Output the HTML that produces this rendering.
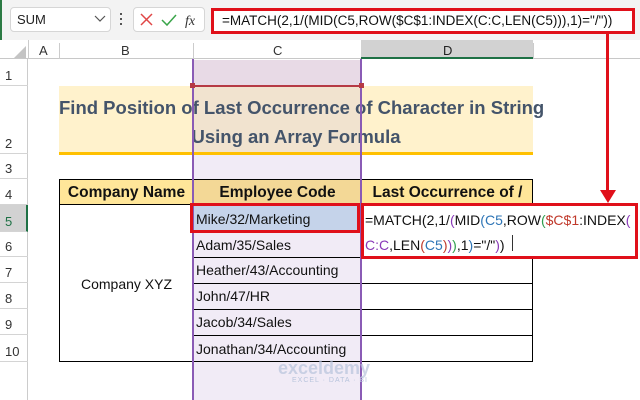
<!DOCTYPE html>
<html><head><meta charset="utf-8"><style>
*{margin:0;padding:0;box-sizing:border-box}
body{width:640px;height:400px;background:#fff;position:relative;overflow:hidden;font-family:"Liberation Sans",sans-serif}
.a{position:absolute}
.t{font-family:"Liberation Sans",sans-serif;white-space:nowrap}
.rh{position:absolute;left:0;width:28px;font-size:13px;color:#333;padding-left:5px;border-bottom:1px solid #d4d4d4;display:flex;align-items:flex-end;padding-bottom:2px}
.cell{position:absolute;font-size:14px;color:#111;white-space:nowrap;display:flex;align-items:center}
</style></head><body>
<!-- top bar -->
<div class="a" style="left:0;top:0;width:640px;height:40px;background:#f3f3f3"></div>
<div class="a" style="left:0;top:0;width:2px;height:400px;background:#2b7a44"></div>
<div class="a" style="left:10px;top:7px;width:101px;height:25px;background:#fff;border:1px solid #d6d6d6;border-radius:4px"></div>
<div class="a t" style="left:17px;top:12px;font-size:13px;color:#222">SUM</div>
<svg class="a" style="left:94px;top:15px" width="12" height="8"><path d="M1 1 L6 6 L11 1" stroke="#555" fill="none" stroke-width="1.2"/></svg>
<div class="a" style="left:120px;top:13px;width:2px;height:2px;background:#555;box-shadow:0 5px 0 #555,0 10px 0 #555"></div>
<div class="a" style="left:133px;top:7px;width:72px;height:25px;background:#fff;border:1px solid #d6d6d6;border-radius:4px"></div>
<svg class="a" style="left:139px;top:12px" width="60" height="16"><path d="M2 2 L13 13 M13 2 L2 13" stroke="#e04646" stroke-width="1.5"/><path d="M23 8 L28 13 L37 3" stroke="#3aa54a" fill="none" stroke-width="1.5"/><text x="46" y="13" font-family="Liberation Serif" font-style="italic" font-size="14" fill="#333">fx</text></svg>
<div class="a" style="left:211px;top:8px;width:424px;height:26px;background:#fff;border:3px solid #e0101a"></div>
<div class="a t" style="left:222px;top:13px;font-size:13.5px;color:#111">=MATCH(2,1/(MID(C5,ROW($C$1:INDEX(C:C,LEN(C5))),1)="/"))</div>
<!-- column header -->
<div class="a" style="left:0;top:40px;width:640px;height:19px;background:#fff;border-bottom:1px solid #c8c8c8"></div>
<svg class="a" style="left:14px;top:46px" width="12" height="12"><path d="M12 0 L12 12 L0 12 Z" fill="#c4c4c4"/></svg>
<div class="a" style="left:28px;top:40px;width:1px;height:19px;background:#ccc"></div>
<div class="a" style="left:59px;top:43px;width:1px;height:16px;background:#ccc"></div>
<div class="a" style="left:193px;top:43px;width:1px;height:16px;background:#ccc"></div>
<div class="a" style="left:361px;top:40px;width:172px;height:19px;background:#d2d2d2;border-bottom:2px solid #1e7145"></div>
<div class="a" style="left:533px;top:43px;width:1px;height:16px;background:#ccc"></div>
<div class="a t" style="left:39px;top:43px;font-size:13px;color:#333">A</div>
<div class="a t" style="left:121px;top:43px;font-size:13px;color:#333">B</div>
<div class="a t" style="left:273px;top:43px;font-size:13px;color:#333">C</div>
<div class="a t" style="left:443px;top:43px;font-size:13px;color:#222">D</div>
<!-- row headers -->
<div class="a" style="left:0;top:59px;width:28px;height:341px;background:#fff;border-right:1px solid #ccc"></div>
<div class="rh" style="top:59px;height:27px">1</div>
<div class="rh" style="top:86px;height:68px">2</div>
<div class="rh" style="top:154px;height:25px">3</div>
<div class="rh" style="top:179px;height:26px">4</div>
<div class="rh" style="top:205px;height:27px;background:#d2d2d2;border-right:2px solid #1e7145;color:#1e7145">5</div>
<div class="rh" style="top:232px;height:25px">6</div>
<div class="rh" style="top:257px;height:26px">7</div>
<div class="rh" style="top:283px;height:26px">8</div>
<div class="rh" style="top:309px;height:26px">9</div>
<div class="rh" style="top:335px;height:27px">10</div>
<!-- column C highlight -->
<div class="a" style="left:193px;top:60px;width:168px;height:340px;background:#f1ebf6"></div>
<div class="a" style="left:193px;top:60px;width:168px;height:26px;background:#e8dae6"></div>
<!-- title -->
<div class="a" style="left:59px;top:86px;width:474px;height:66px;background:#fff2cc"></div>
<div class="a" style="left:193px;top:86px;width:168px;height:66px;background:#f1e3cf"></div>
<div class="a" style="left:59px;top:152px;width:474px;height:3px;background:#ffc000"></div>
<div class="a t" style="left:59px;top:93px;width:474px;text-align:center;font-size:18.5px;font-weight:bold;color:#44546a;line-height:29px">Find Position of Last Occurrence of Character in String<br>Using an Array Formula</div>
<!-- table -->
<div class="a" style="left:59px;top:179px;width:474px;height:183px;border:1px solid #000"></div>
<div class="a" style="left:60px;top:180px;width:472px;height:25px;background:#ffe699;border-bottom:1px solid #000"></div>
<div class="a" style="left:193px;top:180px;width:168px;height:25px;background:#f3d896"></div>
<div class="a" style="left:193px;top:179px;width:1px;height:183px;background:#000"></div>
<div class="a" style="left:361px;top:179px;width:1px;height:183px;background:#000"></div>
<div class="cell" style="left:60px;top:180px;width:133px;height:25px;justify-content:center;font-weight:bold;font-size:15.5px">Company Name</div>
<div class="cell" style="left:194px;top:180px;width:167px;height:25px;justify-content:center;font-weight:bold;font-size:15.5px">Employee Code</div>
<div class="cell" style="left:362px;top:180px;width:171px;height:25px;justify-content:center;font-weight:bold;font-size:15.5px">Last Occurrence of /</div>
<div class="cell" style="left:60px;top:205px;width:133px;height:157px;justify-content:center">Company XYZ</div>
<div class="a" style="left:194px;top:206px;width:166px;height:25px;background:#c5d3ea"></div>
<div class="a" style="left:194px;top:231px;width:339px;height:1px;background:#000"></div>
<div class="a" style="left:194px;top:257px;width:339px;height:1px;background:#000"></div>
<div class="a" style="left:194px;top:283px;width:339px;height:1px;background:#000"></div>
<div class="a" style="left:194px;top:309px;width:339px;height:1px;background:#000"></div>
<div class="a" style="left:194px;top:335px;width:339px;height:1px;background:#000"></div>
<div class="cell" style="left:196px;top:205px;height:27px">Mike/32/Marketing</div>
<div class="cell" style="left:196px;top:232px;height:25px">Adam/35/Sales</div>
<div class="cell" style="left:196px;top:257px;height:26px">Heather/43/Accounting</div>
<div class="cell" style="left:196px;top:283px;height:26px">John/47/HR</div>
<div class="cell" style="left:196px;top:309px;height:26px">Jacob/34/Sales</div>
<div class="cell" style="left:196px;top:335px;height:27px">Jonathan/34/Accounting</div>
<!-- purple selection lines -->
<div class="a" style="left:192px;top:59px;width:2px;height:341px;background:#8a5bb5"></div>
<div class="a" style="left:360px;top:59px;width:2px;height:341px;background:#8a5bb5"></div>
<div class="a" style="left:193px;top:85px;width:168px;height:2px;background:#b63a45"></div>
<div class="a" style="left:190px;top:83px;width:5px;height:5px;background:#b63a45"></div>
<div class="a" style="left:359px;top:83px;width:5px;height:5px;background:#b63a45"></div>
<!-- red box C5 -->
<div class="a" style="left:190px;top:203px;width:170px;height:30px;border:3px solid #e0101a"></div>
<!-- formula overlay -->
<div class="a" style="left:361px;top:203px;width:277px;height:56px;background:#fff;border:3px solid #e0101a"></div>
<div class="a t" style="left:365px;top:208px;font-size:14px;line-height:25px;color:#111">=MATCH(2,1/<span style="color:#8a3ab9">(</span>MID<span style="color:#2e75b6">(</span><span style="color:#2e75b6">C5</span>,ROW<span style="color:#2e9e4e">(</span><span style="color:#c0392b">$C$1</span>:INDEX<span style="color:#8a3ab9">(</span><br><span style="color:#8a3ab9">C:C</span>,LEN<span style="color:#c0392b">(</span><span style="color:#2e75b6">C5</span><span style="color:#c0392b">)</span><span style="color:#8a3ab9">)</span><span style="color:#2e9e4e">)</span>,1<span style="color:#2e75b6">)</span>="/"<span style="color:#8a3ab9">)</span>)</div>
<div class="a" style="left:512px;top:235px;width:1px;height:16px;background:#333"></div>
<!-- arrow -->
<div class="a" style="left:606px;top:34px;width:3px;height:160px;background:#e0101a"></div>
<svg class="a" style="left:600px;top:190px" width="16" height="14"><path d="M0 0 L16 0 L8 13 Z" fill="#e0101a"/></svg>
<!-- watermark -->
<div class="a t" style="left:278px;top:358px;font-size:18px;font-weight:bold;color:#b8c4dc;opacity:.7">exceldemy</div>
<div class="a t" style="left:292px;top:377px;font-size:7px;color:#b8c4dc;letter-spacing:1px">EXCEL · DATA · BI</div>
</body></html>
